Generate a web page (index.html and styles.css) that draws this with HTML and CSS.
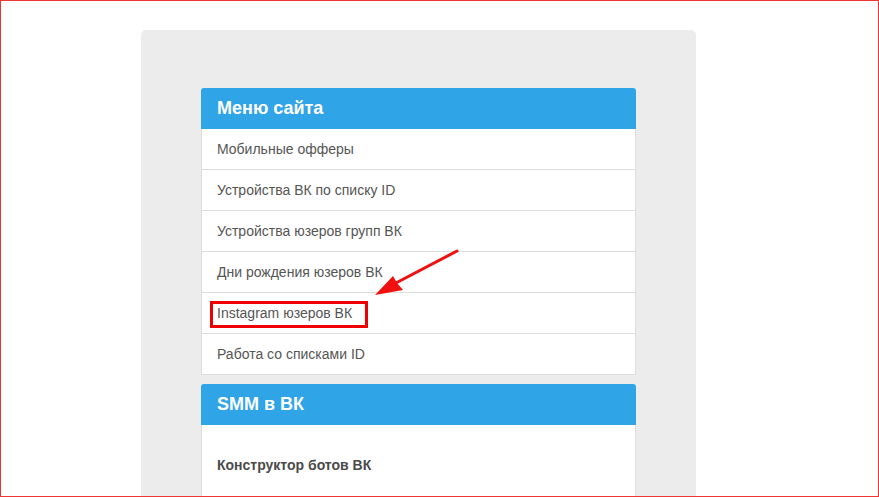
FILE: index.html
```html
<!DOCTYPE html>
<html lang="ru">
<head>
<meta charset="utf-8">
<title>Меню сайта</title>
<link rel="stylesheet" href="styles.css">
</head>
<body>
<div class="frame">
  <div class="sheet">
    <div class="card">
      <div class="card-head">Меню сайта</div>
      <ul class="menu">
        <li class="menu-item">Мобильные офферы</li>
        <li class="menu-item">Устройства ВК по списку ID</li>
        <li class="menu-item">Устройства юзеров групп ВК</li>
        <li class="menu-item">Дни рождения юзеров ВК</li>
        <li class="menu-item">Instagram юзеров ВК</li>
        <li class="menu-item">Работа со списками ID</li>
      </ul>
    </div>
    <div class="card card-second">
      <div class="card-head">SMM в ВК</div>
      <div class="card-body">
        <div class="body-title">Конструктор ботов ВК</div>
      </div>
    </div>
  </div>
  <div class="mark-box"></div>
  <svg class="mark-arrow" width="879" height="497" viewBox="0 0 879 497" aria-hidden="true">
    <line x1="457" y1="251" x2="394" y2="284" stroke="#f01010" stroke-width="3" stroke-linecap="round"/>
    <polygon points="375,295 393,276 397,283 403,290" fill="#f01010"/>
  </svg>
</div>
</body>
</html>
```

FILE: styles.css
```css
html, body {
  margin: 0;
  padding: 0;
  background: #fff;
}

.frame {
  position: relative;
  box-sizing: border-box;
  width: 879px;
  height: 497px;
  border: 1px solid #f03535;
  overflow: hidden;
  padding: 29px 0 0 140px;
  font-family: "Liberation Sans", Arial, sans-serif;
}

.sheet {
  width: 555px;
  height: 600px;
  box-sizing: border-box;
  background: #ececec;
  border-radius: 5px;
  padding: 58px 60px 0 60px;
}

.card {
  width: 435px;
}

.card-second {
  margin-top: 9px;
}

.card-head {
  height: 41px;
  box-sizing: border-box;
  background: #2fa4e7;
  color: #fff;
  font-weight: bold;
  font-size: 18px;
  line-height: 41px;
  padding: 0 16px;
  border-radius: 3px 3px 0 0;
}

.menu {
  list-style: none;
  margin: 0;
  padding: 0;
}

.menu-item {
  height: 41px;
  box-sizing: border-box;
  padding: 10px 15px;
  line-height: 20px;
  font-size: 14px;
  color: #555;
  background: #fff;
  border: 1px solid #dddddd;
  border-top: none;
}

.card-body {
  background: #fff;
  border: 1px solid #dddddd;
  border-top: none;
  height: 120px;
  padding: 30px 15px 0;
}

.body-title {
  font-size: 14px;
  line-height: 20px;
  font-weight: bold;
  color: #4a4a4a;
}

.mark-box {
  position: absolute;
  left: 209px;
  top: 300px;
  width: 152px;
  height: 21px;
  border: 3px solid #ee0000;
}

.mark-arrow {
  position: absolute;
  left: -1px;
  top: -1px;
}
```
